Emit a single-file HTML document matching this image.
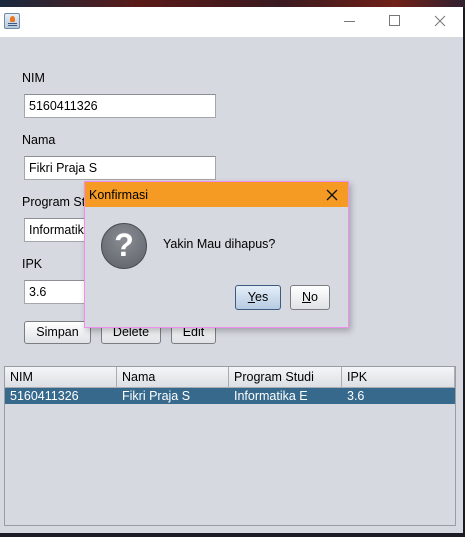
<!DOCTYPE html>
<html><head><style>
*{margin:0;padding:0;box-sizing:border-box}
body{width:465px;height:537px;overflow:hidden;background:#1c1a24;font-family:"Liberation Sans",sans-serif;font-size:12px;color:#000;position:relative}
.a{position:absolute}
.field{position:absolute;background:#fff;border:1px solid #a3a6ab;border-top-color:#8c8f94;height:24px;padding-left:4px;line-height:22px;font-size:12.5px}
.lbl{position:absolute;font-size:12.5px}
.btn{position:absolute;height:23px;border:1px solid #7a7d82;border-radius:3px;background:linear-gradient(#fff,#dfe2e6);text-align:center;line-height:21px;font-size:12.5px}
.th{position:absolute;top:0;height:21px;line-height:21px;padding-left:5px;border-right:1px solid #a9acb1;font-size:12.5px}
.td{position:absolute;top:0;line-height:16px;padding-left:5px;color:#fff;font-size:12.5px}
</style></head><body>
<div class="a" style="left:0;top:0;width:465px;height:8px;background:linear-gradient(90deg,#1a2a3e,#5a1a18 30%,#3a1a20 60%,#702018 85%,#302030)"></div>
<div class="a" style="left:0;top:7px;width:463px;height:526px;background:#d6d9e0"></div>
<div class="a" style="left:0;top:7px;width:463px;height:30px;background:#fff"></div>
<div class="a" style="left:4px;top:13px;width:16px;height:16px;border:1px solid #6d8aa8;border-radius:2px;background:linear-gradient(#e8eef5,#b8c8da)"><div class="a" style="left:5px;top:2px;width:5px;height:6px;background:#e87820;border-radius:50% 50% 30% 30%"></div><div class="a" style="left:3px;top:9px;width:9px;height:1px;background:#3a5a80"></div><div class="a" style="left:3px;top:11px;width:9px;height:1px;background:#3a5a80"></div></div>
<div class="a" style="left:344px;top:21px;width:11px;height:1px;background:#777"></div>
<div class="a" style="left:389px;top:15px;width:11px;height:11px;border:1px solid #777"></div>
<svg class="a" style="left:434px;top:15px" width="12" height="12"><path d="M1 1L11 11M11 1L1 11" stroke="#777" stroke-width="1"/></svg>

<div class="lbl" style="left:22px;top:71px">NIM</div>
<div class="field" style="left:24px;top:94px;width:192px">5160411326</div>
<div class="lbl" style="left:22px;top:133px">Nama</div>
<div class="field" style="left:24px;top:156px;width:192px">Fikri Praja S</div>
<div class="lbl" style="left:22px;top:195px">Program Studi</div>
<div class="field" style="left:24px;top:218px;width:192px">Informatika E</div>
<div class="lbl" style="left:22px;top:257px">IPK</div>
<div class="field" style="left:24px;top:280px;width:192px">3.6</div>

<div class="btn" style="left:24px;top:321px;width:67px">Simpan</div>
<div class="btn" style="left:101px;top:321px;width:60px">Delete</div>
<div class="btn" style="left:171px;top:321px;width:45px">Edit</div>

<div class="a" style="left:4px;top:366px;width:452px;height:160px;border:1px solid #9a9da3;background:#d6d9e0">
 <div class="a" style="left:0;top:0;width:450px;height:21px;background:linear-gradient(#f4f5f7,#dcdfe4);border-bottom:1px solid #a9acb1">
  <div class="th" style="left:0;width:112px">NIM</div>
  <div class="th" style="left:112px;width:112px">Nama</div>
  <div class="th" style="left:224px;width:113px">Program Studi</div>
  <div class="th" style="left:337px;width:113px">IPK</div>
 </div>
 <div class="a" style="left:0;top:21px;width:450px;height:16px;background:#36698c">
  <div class="td" style="left:0">5160411326</div>
  <div class="td" style="left:112px">Fikri Praja S</div>
  <div class="td" style="left:224px">Informatika E</div>
  <div class="td" style="left:337px">3.6</div>
 </div>
</div>

<div class="a" style="left:84px;top:181px;width:265px;height:147px;border:1px solid #f08ef0;background:#d6d9e0;box-shadow:2px 3px 6px rgba(0,0,0,.25)">
 <div class="a" style="left:0;top:0;width:263px;height:25px;background:#f59b23"></div>
 <div class="a" style="left:4px;top:6px;font-size:12.5px">Konfirmasi</div>
 <svg class="a" style="left:241px;top:7px" width="12" height="12"><path d="M1 1L11 11M11 1L1 11" stroke="#111" stroke-width="1.3"/></svg>
 <div class="a" style="left:16px;top:41px;width:46px;height:46px;border-radius:50%;background:radial-gradient(circle at 50% 35%,#8a8e94,#5c6067);border:1px solid #4a4d52"></div>
 <div class="a" style="left:16px;top:43px;width:46px;text-align:center;color:#fff;font-weight:bold;font-size:32px;line-height:40px">?</div>
 <div class="a" style="left:78px;top:55px;font-size:12.5px">Yakin Mau dihapus?</div>
 <div class="btn" style="left:150px;top:103px;width:46px;height:25px;line-height:23px;border-color:#3d5a80;background:linear-gradient(#e4eef8,#b6cbe2)"><u>Y</u>es</div>
 <div class="btn" style="left:205px;top:103px;width:40px;height:25px;line-height:23px"><u>N</u>o</div>
</div>
</body></html>
